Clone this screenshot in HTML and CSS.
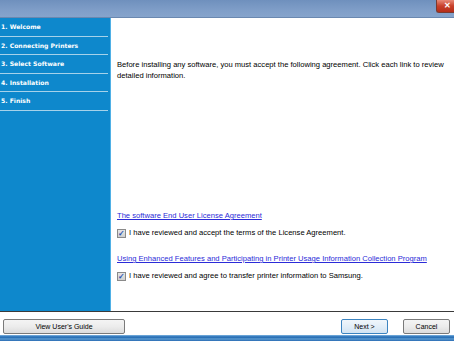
FILE: index.html
```html
<!DOCTYPE html>
<html lang="en">
<head>
    <meta charset="UTF-8">
    <title>Setup</title>
    <link rel="stylesheet" href="styles.css">
</head>
<body>
    <div class="window">
        <div class="titlebar">
            <div class="close-btn">&#x2715;</div>
        </div>

        <div class="main">
            <!-- step list -->
            <ul class="steps">
                <li class="step">1. Welcome</li>
                <li class="step">2. Connecting Printers</li>
                <li class="step">3. Select Software</li>
                <li class="step">4. Installation</li>
                <li class="step">5. Finish</li>
            </ul>

            <div class="content">
                <p class="intro">Before installing any software, you must accept the following agreement. Click each link to review detailed information.</p>

                <div class="agreements">
                    <a class="link" href="#">The software End User License Agreement</a>
                    <label class="check-row">
                        <span class="checkbox">&#x2713;</span>
                        I have reviewed and accept the terms of the License Agreement.
                    </label>
                    <a class="link link-second" href="#">Using Enhanced Features and Participating in Printer Usage Information Collection Program</a>
                    <label class="check-row">
                        <span class="checkbox">&#x2713;</span>
                        I have reviewed and agree to transfer printer information to Samsung.
                    </label>
                </div>
            </div>
        </div>

        <div class="footer">
            <button class="btn btn-guide">View User's Guide</button>
            <div class="footer-right">
                <button class="btn btn-default">Next &gt;</button>
                <button class="btn">Cancel</button>
            </div>
        </div>

        <div class="taskbar"></div>
    </div>
</body>
</html>
```

FILE: styles.css
```css
body {
    margin: 0;
    padding: 0;
    background-color: #fff;
    font-family: "Liberation Sans", Arial, sans-serif;
}

.window {
    width: 454px;
    height: 341px;
    display: flex;
    flex-direction: column;
    overflow: hidden;
}

.titlebar {
    height: 18px;
    flex-shrink: 0;
    background: linear-gradient(#6f90bd, #7f9ec8 60%, #86a4cc);
    border-bottom: 1px solid #6a88b0;
    box-sizing: border-box;
    display: flex;
    justify-content: flex-end;
}

.close-btn {
    width: 18px;
    height: 13px;
    background: linear-gradient(#e88a78, #c8402a 50%, #b52d18);
    border: 1px solid #7a3a30;
    border-top: none;
    border-right: none;
    border-radius: 0 0 0 3px;
    color: #fff;
    font-size: 8px;
    font-weight: bold;
    line-height: 12px;
    text-align: center;
    box-sizing: border-box;
    padding-left: 4px;
}

.main {
    height: 293px;
    flex-shrink: 0;
    display: flex;
}

.steps {
    width: 110px;
    margin: 0;
    padding: 0;
    list-style: none;
    background-color: #0e88cc;
    border-right: 1px solid #4fb0e6;
}

.step {
    height: 18.5px;
    line-height: 18px;
    width: 108px;
    padding-left: 1px;
    box-sizing: border-box;
    border-bottom: 1.5px solid #a6d2ea;
    color: #fff;
    font-family: "DejaVu Sans", Tahoma, sans-serif;
    font-size: 6.1px;
    font-weight: bold;
}

.content {
    flex: 1;
    padding: 0 6px;
    display: flex;
    flex-direction: column;
    color: #000;
    font-size: 7.6px;
}

.intro {
    margin: 41px 0 0 0;
    line-height: 11px;
}

.agreements {
    margin-top: auto;
    margin-bottom: 30px;
    display: flex;
    flex-direction: column;
}

.link {
    color: #2b2bd8;
    text-decoration: underline;
    line-height: 10px;
}

.link-second {
    margin-top: 16px;
}

.check-row {
    margin-top: 7px;
    display: flex;
    align-items: center;
    gap: 3px;
    line-height: 10px;
}

.checkbox {
    width: 9px;
    height: 9px;
    border: 1px solid #8a8a8a;
    background: linear-gradient(#e6e6e6, #cfcfcf);
    box-sizing: border-box;
    color: #2a4fb0;
    font-size: 8px;
    font-weight: bold;
    line-height: 7px;
    text-align: center;
}

.footer {
    height: 24px;
    flex-shrink: 0;
    border-top: 1px solid #3a3a3a;
    background-color: #fff;
    box-sizing: border-box;
    display: flex;
    align-items: flex-end;
    justify-content: space-between;
    padding: 0 4px 1px 3px;
}

.footer-right {
    display: flex;
    gap: 15px;
}

.btn {
    height: 15px;
    width: 47px;
    padding: 0;
    border: 1px solid #7a7a7a;
    border-radius: 2px;
    background: linear-gradient(#f4f4f4, #ececec 50%, #dcdcdc);
    font-family: "Liberation Sans", Arial, sans-serif;
    font-size: 7px;
    color: #000;
}

.btn-guide {
    width: 122px;
}

.btn-default {
    border-color: #3c84c0;
    background: linear-gradient(#f0f6fb, #e2eef8 50%, #d2e4f2);
}

.taskbar {
    height: 6px;
    flex-shrink: 0;
    background: linear-gradient(#7fb6e2, #1e66b0 35%, #5a9ad0 65%, #2a6cb4);
}
```
